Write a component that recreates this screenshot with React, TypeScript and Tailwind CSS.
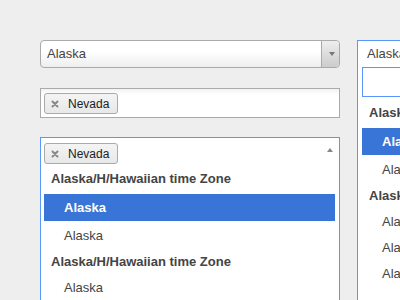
import React from "react";

const font = { fontFamily: '"Liberation Sans", Arial, Helvetica, sans-serif' };

function Tag() {
  return (
    <div className="flex h-[21px] w-[74px] items-center rounded-[3px] border border-[#aaa] bg-linear-to-b from-[#f4f4f4] to-[#e8e8e8] pl-[6px] text-[12px] text-[#222]">
      <svg width="8" height="8" viewBox="0 0 8 8" className="mr-[9px]">
        <path d="M1.5 1.5 L6.5 6.5 M6.5 1.5 L1.5 6.5" stroke="#888" strokeWidth="2" strokeLinecap="round" />
      </svg>
      <span className="leading-none">Nevada</span>
    </div>
  );
}

function Header({ children }: { children: React.ReactNode }) {
  return (
    <div className="flex h-[26px] items-center whitespace-nowrap pl-[7px] text-[13px] font-bold text-[#444]">{children}</div>
  );
}

function Item({ children, active }: { children: React.ReactNode; active?: boolean }) {
  if (active) {
    return (
      <div className="my-[2px] flex h-[27px] items-center whitespace-nowrap bg-[#3875d7] pl-[20px] text-[13px] font-bold text-white">
        {children}
      </div>
    );
  }
  return <div className="flex h-[26px] items-center whitespace-nowrap pl-[20px] text-[13px] text-[#444]">{children}</div>;
}

export default function App() {
  return (
    <div className="h-[300px] w-[400px] overflow-hidden bg-[#eeeeee]" style={font}>
      <div className="flex gap-[17px] pl-[40px] pt-[40px]">
        <div className="flex w-[300px] shrink-0 flex-col">
          {/* single select */}
          <div className="flex h-[28px] rounded-[4px] border border-[#aaa] bg-linear-to-b from-white from-40% to-[#eeeeee]">
            <div className="flex flex-1 items-center pl-[6px] text-[13px] text-[#444]">Alaska</div>
            <div className="flex w-[18px] items-center justify-center rounded-r-[4px] border-l border-[#aaa] bg-linear-to-b from-[#eeeeee] to-[#cccccc] pl-[2px]">
              <svg width="6" height="4" viewBox="0 0 6 4">
                <path d="M0 0 L6 0 L3 4 Z" fill="#777" />
              </svg>
            </div>
          </div>

          {/* multi select closed */}
          <div className="mt-[20px] flex h-[30px] items-start border border-[#aaa] bg-linear-to-b from-[#f2f2f2] from-0% to-white to-20% pl-[3px] pt-[4px]">
            <Tag />
          </div>

          {/* multi select open */}
          <div className="mt-[19px] h-[200px] border border-[#5897fb] bg-white">
            <div className="flex items-start justify-between pl-[3px] pr-[6px] pt-[5px]">
              <Tag />
              <svg width="6" height="4" viewBox="0 0 6 4" className="mt-[5px]">
                <path d="M0 4 L6 4 L3 0 Z" fill="#888" />
              </svg>
            </div>
            <div className="ml-[3px] mr-[4px] mt-[2px]">
              <Header>Alaska/H/Hawaiian time Zone</Header>
              <Item active>Alaska</Item>
              <Item>Alaska</Item>
              <Header>Alaska/H/Hawaiian time Zone</Header>
              <Item>Alaska</Item>
            </div>
          </div>
        </div>

        {/* right column */}
        <div className="h-[280px] w-[300px] shrink-0 border border-[#5897fb] bg-white">
          <div className="flex h-[26px] items-center pl-[9px] text-[13px] text-[#444]">Alaska</div>
          <div className="ml-[4px] h-[30px] border border-[#5897fb] bg-white" />
          <div className="ml-[4px] mt-[3px]">
            <Header>Alaska/H/Hawaiian time Zone</Header>
            <Item active>Alaska</Item>
            <Item>Alaska</Item>
            <Header>Alaska/H/Hawaiian time Zone</Header>
            <Item>Alaska</Item>
            <Item>Alaska</Item>
            <Item>Alaska</Item>
          </div>
        </div>
      </div>
    </div>
  );
}
